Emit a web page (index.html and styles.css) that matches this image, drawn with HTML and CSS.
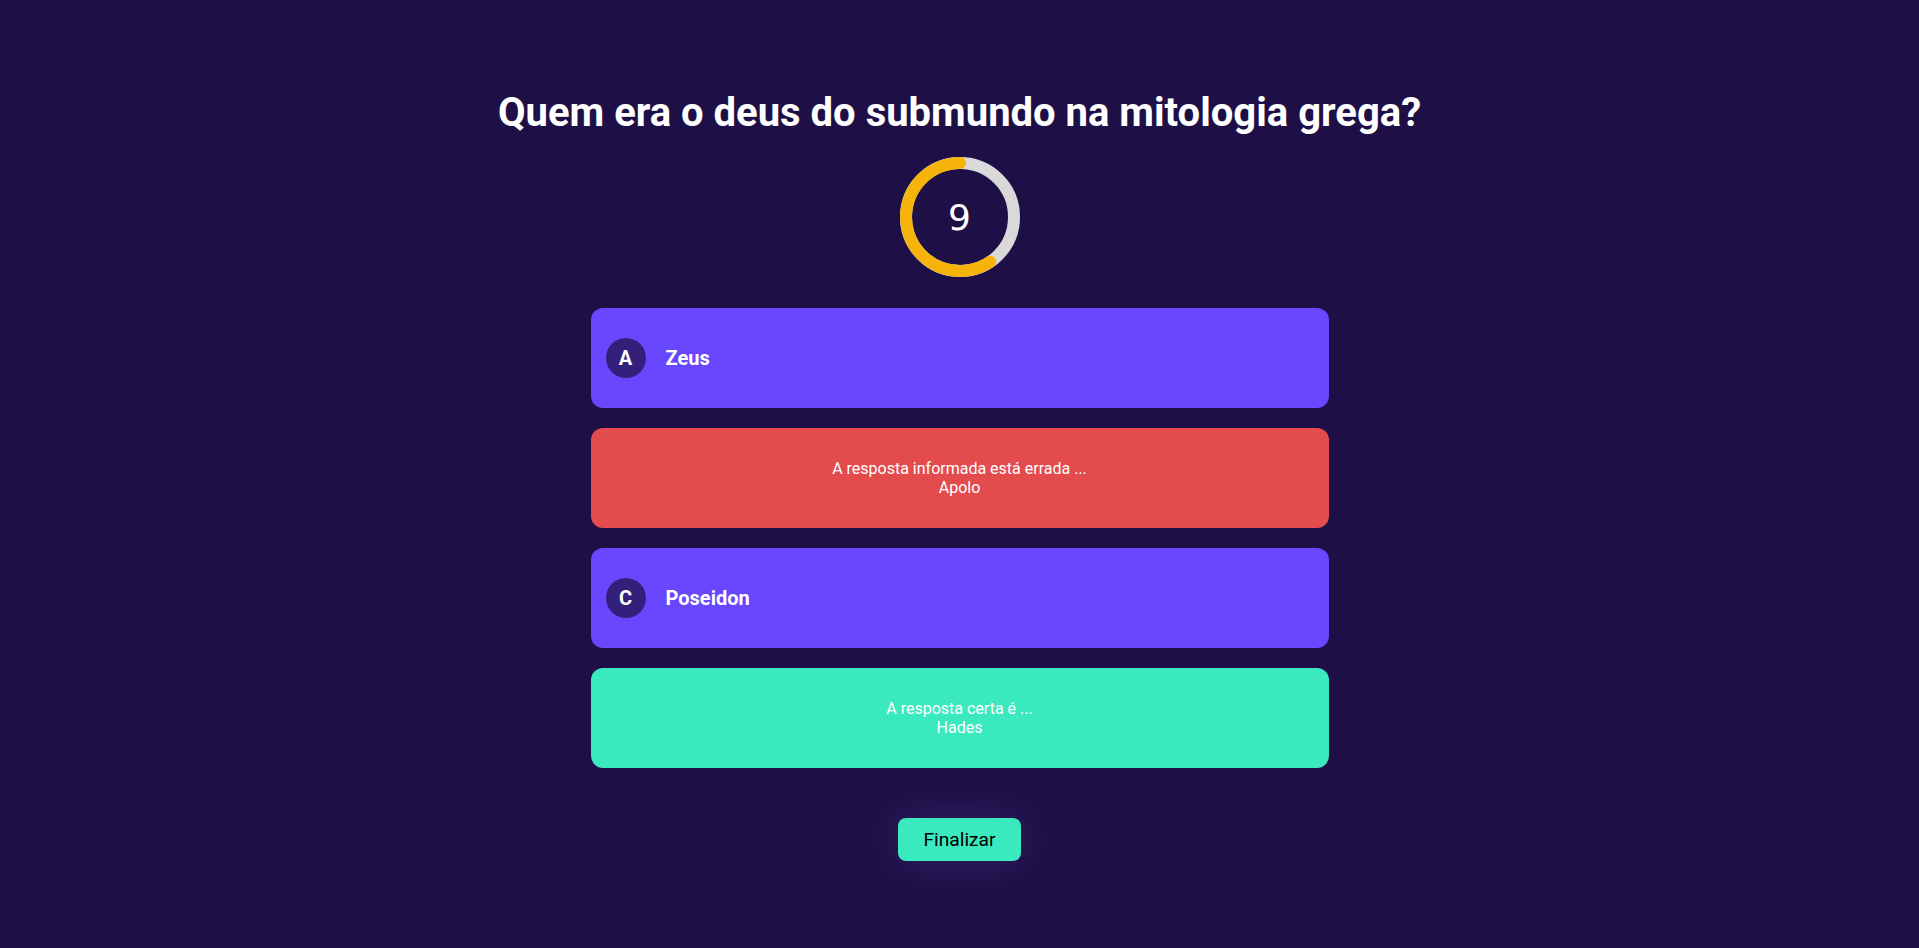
FILE: index.html
```html
<!DOCTYPE html>
<html lang="pt-BR">
<head>
<meta charset="utf-8">
<title>Quiz</title>
<link rel="stylesheet" href="styles.css">
</head>
<body>
<main class="quiz">
  <h1 class="question">Quem era o deus do submundo na mitologia grega?</h1>
  <div class="timer">
    <svg class="timer-ring" width="120" height="120" viewBox="0 0 120 120">
      <circle cx="60" cy="60" r="54" fill="none" stroke="#d9d9d9" stroke-width="12"/>
      <path d="M60 6 A54 54 0 1 0 90.2 104.8" fill="none" stroke="#f6b40b" stroke-width="12" stroke-linecap="round"/>
    </svg>
    <span class="timer-value">9</span>
  </div>
  <div class="answers">
    <div class="answer answer-option">
      <span class="letter">A</span>
      <span class="answer-text">Zeus</span>
    </div>
    <div class="answer answer-wrong">
      <span>A resposta informada está errada ...</span>
      <span>Apolo</span>
    </div>
    <div class="answer answer-option">
      <span class="letter">C</span>
      <span class="answer-text">Poseidon</span>
    </div>
    <div class="answer answer-right">
      <span>A resposta certa é ...</span>
      <span>Hades</span>
    </div>
  </div>
  <button class="finish">Finalizar</button>
</main>
</body>
</html>
```
FILE: styles.css
```css
html, body {
  margin: 0;
  padding: 0;
}
body {
  background: #1e1046;
  font-family: Roboto, "Liberation Sans", sans-serif;
  color: #fff;
  min-height: 948px;
}
.quiz {
  display: flex;
  flex-direction: column;
  align-items: center;
  padding-top: 89px;
}
.question {
  margin: 0;
  font-size: 40px;
  font-weight: 700;
  line-height: normal;
}
.timer {
  position: relative;
  width: 120px;
  height: 120px;
  margin-top: 21px;
  display: flex;
  align-items: center;
  justify-content: center;
}
.timer-ring {
  position: absolute;
  left: 0;
  top: 0;
}
.timer-value {
  position: relative;
  font-family: "DejaVu Sans", sans-serif;
  font-size: 36px;
  color: #fff;
}
.answers {
  margin-top: 31px;
  width: 738px;
  display: flex;
  flex-direction: column;
  gap: 20px;
}
.answer {
  height: 100px;
  border-radius: 12px;
  box-sizing: border-box;
  display: flex;
}
.answer-option {
  background: #6847fe;
  align-items: center;
  padding-left: 15px;
  gap: 20px;
}
.letter {
  width: 40px;
  height: 40px;
  border-radius: 50%;
  background: #34207a;
  display: flex;
  align-items: center;
  justify-content: center;
  font-size: 20px;
  font-weight: 700;
}
.answer-text {
  font-size: 20px;
  font-weight: 700;
}
.answer-wrong,
.answer-right {
  flex-direction: column;
  align-items: center;
  justify-content: center;
  font-size: 16px;
  line-height: normal;
}
.answer-wrong {
  background: #e34b4d;
}
.answer-right {
  background: #3be9be;
}
.finish {
  margin-top: 50px;
  background: #3be9be;
  color: #000;
  border: none;
  border-radius: 8px;
  padding: 10px 25px;
  font-family: Roboto, "Liberation Sans", sans-serif;
  font-size: 19.2px;
  line-height: normal;
  box-shadow: 0 0 40px rgba(90, 70, 170, 0.35);
}
```
